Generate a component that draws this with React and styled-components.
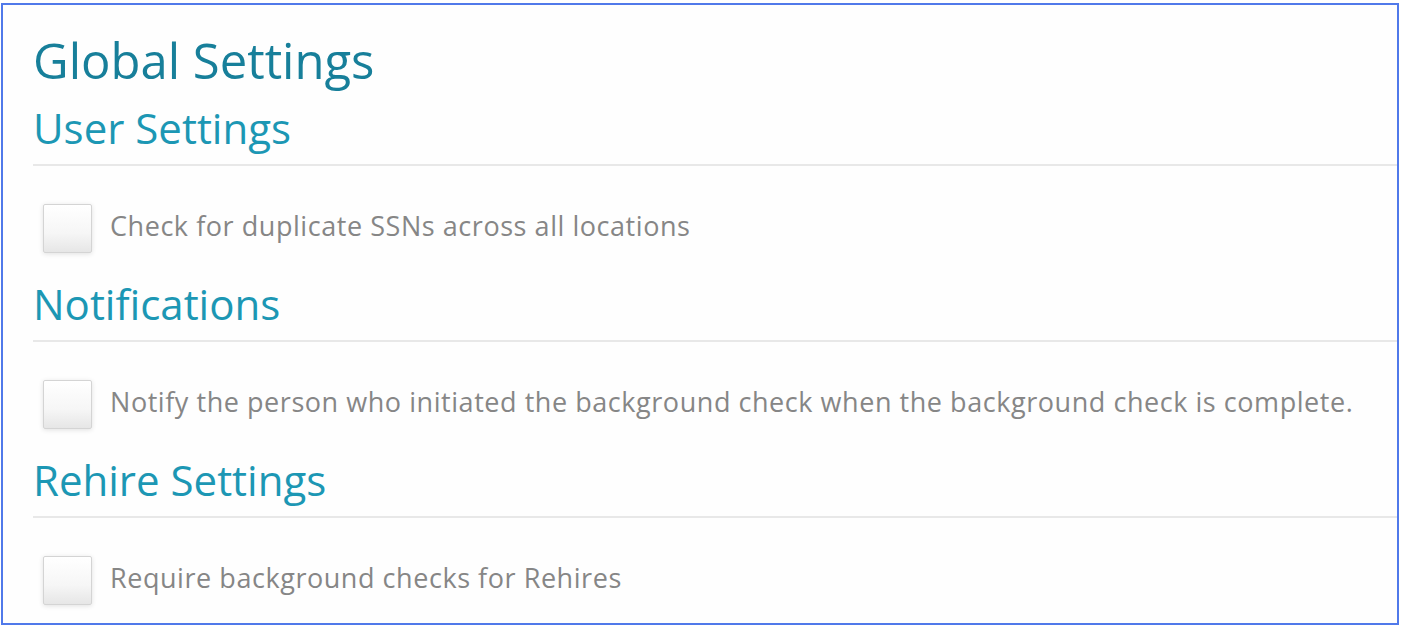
import styled, { createGlobalStyle } from "styled-components";

const GlobalStyle = createGlobalStyle`
  body {
    margin: 0;
    background: #ffffff;
    font-family: "Open Sans", "Liberation Sans", sans-serif;
  }
`;

const Frame = styled.div`
  box-sizing: border-box;
  width: 1398px;
  height: 622px;
  margin: 3px 0 0 1px;
  border: 2px solid #5079ea;
  background: #fefefe;
  padding: 23px 0 0 30px;
  overflow: hidden;
`;

const Title = styled.h1`
  margin: 0 0 8px;
  font-weight: 400;
  font-size: 49px;
  line-height: 64px;
  color: #177f9a;
`;

const Section = styled.section`
  display: flex;
  flex-direction: column;
`;

const Heading = styled.h2`
  margin: 0;
  font-weight: 400;
  font-size: 42px;
  line-height: 56px;
  color: #1c97b4;
  border-bottom: 2px solid #e8e8e8;
  padding-bottom: 8px;
`;

const Row = styled.label`
  display: flex;
  align-items: center;
  gap: 18px;
  padding: 38px 0 23px 10px;
`;

const Box = styled.span`
  box-sizing: border-box;
  width: 49px;
  height: 49px;
  border: 1px solid #d4d4d4;
  border-radius: 2px;
  background: linear-gradient(#ffffff 0%, #f6f6f6 60%, #e6e6e6 100%);
  box-shadow: 0 1px 5px rgba(0, 0, 0, 0.12);
  flex-shrink: 0;
`;

const Label = styled.span`
  font-size: 27px;
  letter-spacing: 0.55px;
  color: #868686;
  padding-bottom: 6px;
`;

const sections = [
  { title: "User Settings", label: "Check for duplicate SSNs across all locations" },
  {
    title: "Notifications",
    label:
      "Notify the person who initiated the background check when the background check is complete.",
  },
  { title: "Rehire Settings", label: "Require background checks for Rehires" },
];

export default function App() {
  return (
    <>
      <GlobalStyle />
      <Frame>
        <Title>Global Settings</Title>
        {sections.map((s) => (
          <Section key={s.title}>
            <Heading>{s.title}</Heading>
            <Row>
              <Box />
              <Label>{s.label}</Label>
            </Row>
          </Section>
        ))}
      </Frame>
    </>
  );
}
